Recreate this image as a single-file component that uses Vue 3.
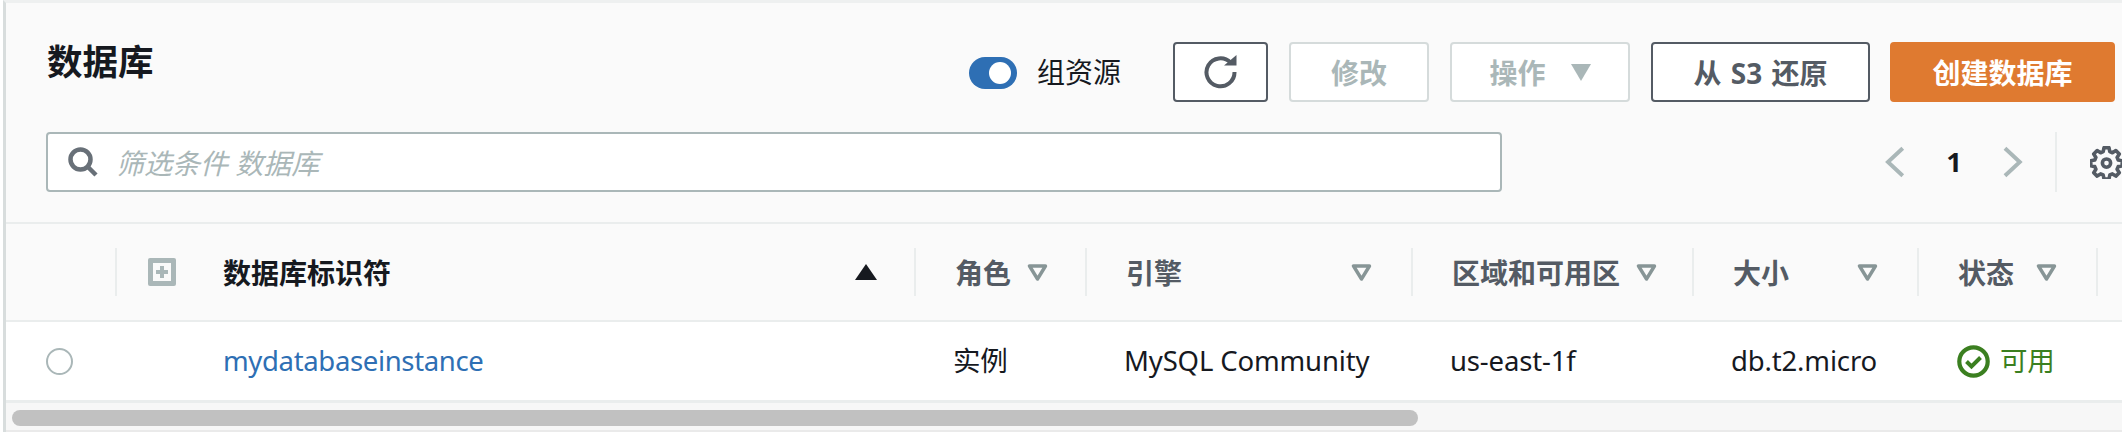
<script setup>
const columns = [
  { label: '角色' },
  { label: '引擎', spread: true },
  { label: '区域和可用区', spread: true },
  { label: '大小', spread: true },
  { label: '状态', spread: true }
]

const row = {
  id: 'mydatabaseinstance',
  role: '实例',
  engine: 'MySQL Community',
  region: 'us-east-1f',
  size: 'db.t2.micro',
  status: '可用'
}
</script>

<template>
  <div class="page">
    <div class="panel">
      <header class="top">
        <h1 class="title">数据库</h1>
        <div class="actions">
          <div class="toggle"><span class="knob"></span></div>
          <span class="toggle-label">组资源</span>
          <button class="btn btn-refresh" aria-label="刷新">
            <svg width="36" height="34" viewBox="0 0 36 34" fill="none">
              <path d="M27.5 7.5A14 14 0 1 0 31.5 17" stroke="#545b64" stroke-width="4" />
              <path d="M21 10.5h12.5V0z" fill="#545b64" />
            </svg>
          </button>
          <button class="btn btn-disabled btn-modify">修改</button>
          <button class="btn btn-disabled btn-ops">操作<span class="caret"></span></button>
          <button class="btn btn-restore">从 S3 还原</button>
          <button class="btn btn-primary">创建数据库</button>
        </div>
      </header>

      <div class="toolbar">
        <div class="search">
          <svg width="30" height="30" viewBox="0 0 30 30" fill="none">
            <circle cx="12.5" cy="12.5" r="10" stroke="#687078" stroke-width="4.5" />
            <path d="M19.5 19.5l8.5 8.5" stroke="#687078" stroke-width="4.5" />
          </svg>
          <span class="placeholder">筛选条件 数据库</span>
        </div>
        <div class="pager">
          <svg width="20" height="32" viewBox="0 0 20 32" fill="none">
            <path d="M18 2L3 16l15 14" stroke="#aab7b8" stroke-width="4" />
          </svg>
          <span class="page-no">1</span>
          <svg width="20" height="32" viewBox="0 0 20 32" fill="none">
            <path d="M2 2l15 14L2 30" stroke="#aab7b8" stroke-width="4" />
          </svg>
        </div>
        <div class="settings">
          <svg width="33" height="33" viewBox="0 0 24 24" fill="none">
            <path
              d="M10.2 1.2h3.6l.6 2.9 1.9.8 2.5-1.6 2.5 2.5-1.6 2.5.8 1.9 2.9.6v3.6l-2.9.6-.8 1.9 1.6 2.5-2.5 2.5-2.5-1.6-1.9.8-.6 2.9h-3.6l-.6-2.9-1.9-.8-2.5 1.6-2.5-2.5 1.6-2.5-.8-1.9-2.9-.6v-3.6l2.9-.6.8-1.9-1.6-2.5 2.5-2.5 2.5 1.6 1.9-.8z"
              stroke="#545b64"
              stroke-width="2.6"
              stroke-linejoin="round"
            />
            <circle cx="12" cy="12.4" r="3" stroke="#545b64" stroke-width="2.6" />
          </svg>
        </div>
      </div>

      <div class="table">
        <div class="thead grid">
          <div class="th th-select"></div>
          <div class="th th-id">
            <span class="expand"><span class="plus"></span></span>
            <span class="th-text">数据库标识符</span>
            <span class="sort-up"></span>
          </div>
          <div v-for="col in columns" :key="col.label" class="th" :class="{ spread: col.spread }">
            <span>{{ col.label }}</span>
            <svg class="filter" width="21" height="17" viewBox="0 0 21 17" fill="none">
              <path d="M2.5 2h16L10.5 15z" stroke="#879596" stroke-width="3.4" stroke-linejoin="round" />
            </svg>
          </div>
          <div class="th"></div>
        </div>

        <div class="tbody grid">
          <div class="td"><span class="radio"></span></div>
          <div class="td td-id"><a class="link">{{ row.id }}</a></div>
          <div class="td">{{ row.role }}</div>
          <div class="td">{{ row.engine }}</div>
          <div class="td">{{ row.region }}</div>
          <div class="td">{{ row.size }}</div>
          <div class="td td-status">
            <svg width="33" height="33" viewBox="0 0 33 33" fill="none">
              <circle cx="16.5" cy="16.5" r="14.2" stroke="#3b7f20" stroke-width="4.2" />
              <path d="M9.5 16.5l5 5 9-9" stroke="#3b7f20" stroke-width="4" />
            </svg>
            <span>{{ row.status }}</span>
          </div>
        </div>
      </div>

      <div class="scrollbar"><div class="thumb"></div></div>
    </div>
  </div>
</template>

<style scoped>
.page {
  width: 2122px;
  height: 432px;
  overflow: hidden;
  background: #fff;
  padding-left: 3px;
  box-sizing: border-box;
  font-family: "Noto Sans", "Noto Sans CJK SC", sans-serif;
  font-size: 27.5px;
  color: #16191f;
}

.panel {
  width: 2119px;
  height: 432px;
  box-sizing: border-box;
  border-top: 3px solid #eef0f0;
  border-left: 3px solid #d8dddd;
  background: #fafafa;
  display: flex;
  flex-direction: column;
}

.top {
  height: 99px;
  flex: none;
  box-sizing: border-box;
  padding: 39px 7px 0 41px;
  display: flex;
  justify-content: space-between;
}

.title {
  margin: -1px 0 0;
  font-size: 35.5px;
  font-weight: 700;
  line-height: 40px;
}

.actions {
  display: flex;
  align-items: center;
  height: 60px;
}

.toggle {
  width: 48px;
  height: 32px;
  border-radius: 16px;
  background: #2e6fb4;
  display: flex;
  align-items: center;
  justify-content: flex-end;
  padding-right: 6px;
  box-sizing: border-box;
  margin-top: 1px;
}

.knob {
  width: 22px;
  height: 22px;
  border-radius: 50%;
  background: #fff;
}

.toggle-label {
  margin-left: 20px;
  margin-right: 52px;
  font-size: 28px;
  line-height: 32px;
  white-space: nowrap;
}

.btn {
  height: 60px;
  box-sizing: border-box;
  border: 2px solid #545b64;
  border-radius: 4px;
  background: #fff;
  color: #545b64;
  font-family: inherit;
  font-size: 28px;
  font-weight: 700;
  padding: 0;
  margin-right: 21px;
  display: flex;
  align-items: center;
  justify-content: center;
  white-space: nowrap;
}

.btn-refresh {
  width: 95px;
}

.btn-disabled {
  border-color: #d5dbdb;
  color: #aab7b8;
}

.btn-modify {
  width: 140px;
}

.btn-ops {
  width: 180px;
}

.caret {
  width: 0;
  height: 0;
  margin-left: 25px;
  border-left: 10px solid transparent;
  border-right: 10px solid transparent;
  border-top: 17px solid #aab7b8;
}

.btn-restore {
  width: 219px;
  margin-right: 20px;
  word-spacing: 2px;
}

.btn-primary {
  width: 225px;
  margin-right: 0;
  background: #df7a30;
  border-color: #df7a30;
  color: #fff;
}

.toolbar {
  height: 120px;
  flex: none;
  box-sizing: border-box;
  padding: 30px 0 0 40px;
  display: flex;
  align-items: flex-start;
}

.search {
  width: 1456px;
  height: 60px;
  flex: none;
  box-sizing: border-box;
  border: 2px solid #aab7b8;
  border-radius: 4px;
  background: #fff;
  display: flex;
  align-items: center;
  padding-left: 20px;
}

.placeholder {
  margin-left: 18px;
  font-size: 28px;
  font-style: italic;
  color: #aab7b8;
  white-space: nowrap;
}

.pager {
  width: 138px;
  height: 60px;
  margin-left: 383px;
  flex: none;
  display: flex;
  align-items: center;
  justify-content: flex-start;
}

.page-no {
  width: 100px;
  text-align: center;
  font-weight: 700;
  margin-top: -2px;
}

.settings {
  height: 60px;
  flex: none;
  box-sizing: border-box;
  border-left: 2px solid #eaeded;
  margin-left: 32px;
  padding-left: 33px;
  display: flex;
  align-items: center;
}

.table {
  flex: none;
  border-top: 2px solid #eaeded;
}

.grid {
  display: grid;
  grid-template-columns: 109px 799px 171px 326px 281px 225px 179px 26px;
}

.thead {
  height: 98px;
  box-sizing: border-box;
  border-bottom: 2px solid #eaeded;
  padding-top: 24px;
}

.th {
  height: 48px;
  box-sizing: border-box;
  padding: 0 0 0 39px;
  display: flex;
  align-items: center;
  border-left: 2px solid #eaeded;
  color: #545b64;
  font-size: 28px;
  font-weight: 700;
  white-space: nowrap;
}

.th-select {
  border-left: 0;
}

.th-id {
  padding-left: 31px;
  color: #16191f;
}

.expand {
  width: 28px;
  height: 28px;
  box-sizing: border-box;
  border: 5px solid #aab7b8;
  border-radius: 2px;
  background: #fafafa;
  display: flex;
  align-items: center;
  justify-content: center;
  flex: none;
}

.plus {
  width: 12px;
  height: 12px;
  background:
    linear-gradient(#aab7b8, #aab7b8) center / 12px 4px no-repeat,
    linear-gradient(#aab7b8, #aab7b8) center / 4px 12px no-repeat;
}

.th-text {
  margin-left: 47px;
}

.sort-up {
  width: 0;
  height: 0;
  margin-left: auto;
  margin-right: 37px;
  border-left: 11px solid transparent;
  border-right: 11px solid transparent;
  border-bottom: 16px solid #16191f;
}

.filter {
  margin-left: 16px;
  flex: none;
}

.spread {
  justify-content: space-between;
  padding-right: 39px;
}

.tbody {
  height: 78px;
  background: #fff;
  border-bottom: 3px solid #eaeded;
}

.td {
  height: 78px;
  box-sizing: border-box;
  padding-left: 39px;
  display: flex;
  align-items: center;
  white-space: nowrap;
  line-height: 32px;
  letter-spacing: -0.15px;
}

.td-id {
  padding-left: 108px;
}

.radio {
  width: 27px;
  height: 27px;
  box-sizing: border-box;
  border: 2px solid #aab7b8;
  border-radius: 50%;
  background: #fff;
  margin-left: 1px;
}

.link {
  color: #2e6fb4;
  letter-spacing: -0.35px;
}

.td-status {
  padding-left: 40px;
  gap: 10px;
  color: #3b7f20;
}

.scrollbar {
  flex: 1;
  background: #f7f7f7;
  border-bottom: 2px solid #eaeaea;
  padding: 7px 0 0 6px;
  box-sizing: border-box;
}

.thumb {
  width: 1406px;
  height: 16px;
  border-radius: 8px;
  background: #c1c1c1;
}
</style>
